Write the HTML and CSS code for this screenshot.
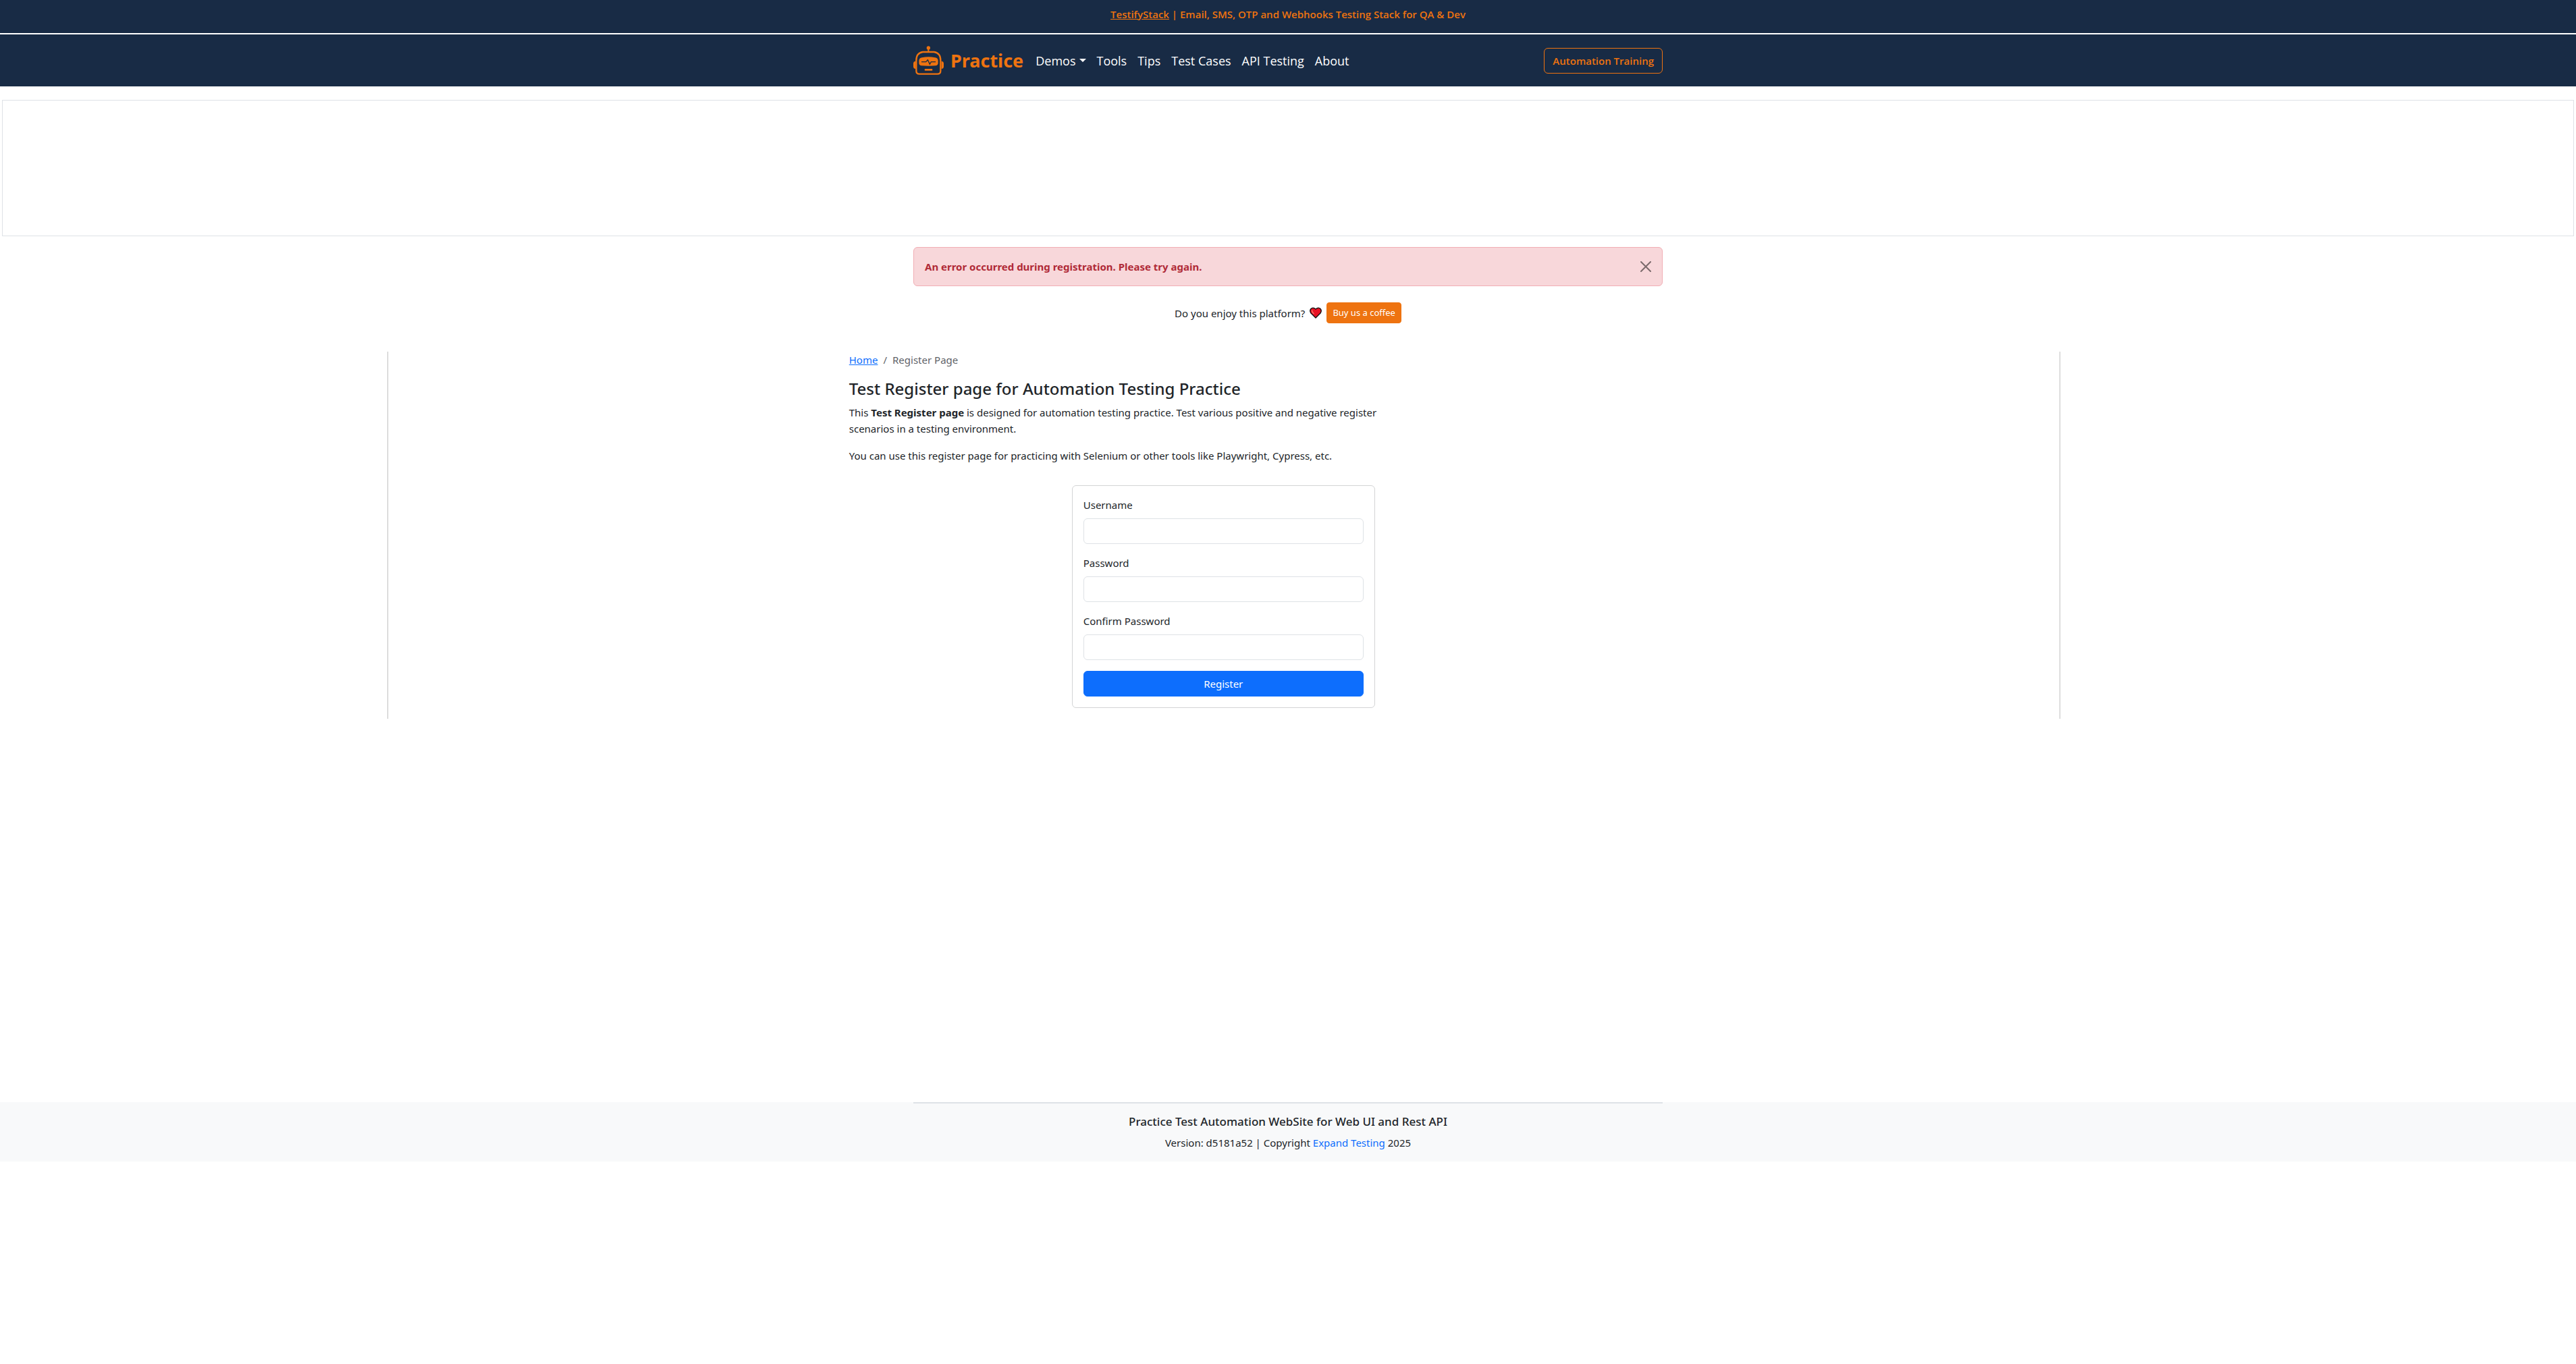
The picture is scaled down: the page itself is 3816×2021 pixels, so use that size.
FILE: index.html
```html
<!DOCTYPE html>
<html lang="en">
<head>
<meta charset="utf-8">
<meta name="viewport" content="width=device-width, initial-scale=1">
<title>Test Register page for Automation Testing Practice</title>
<link rel="stylesheet" href="styles.css">
</head>
<body>
<div class="promo"><a href="#">TestifyStack</a> | Email, SMS, OTP and Webhooks Testing Stack for QA &amp; Dev</div>

<header class="navbar">
  <nav class="container navbar-inner" aria-label="Main">
    <a class="brand" href="#">
      <svg class="brand-logo" viewBox="0 0 135 129" aria-hidden="true">
        <g fill="#ee7310">
          <circle cx="67" cy="9" r="8"/>
          <rect x="64" y="14" width="6" height="14"/>
          <path d="M10 68v34H8q-8-2-8-9V77q0-7 8-9zM125 68v34h2q8-2 8-9V77q0-7-8-9z"/>
          <path d="M38 52q29-6 59 0 13 2 13 14v10q0 11-12 12-31 2-61 0-12-1-12-12V66q0-12 13-14z"/>
          <rect x="50" y="102" width="35" height="8" rx="3"/>
        </g>
        <path d="M42 27h50q29 4 29 38v46q0 14-14 14H27q-14 0-14-14V65q0-34 29-38z" fill="none" stroke="#ee7310" stroke-width="7"/>
        <path d="M36 71h20l8-9 9 19 6-10h20" fill="none" stroke="#182b45" stroke-width="4"/>
      </svg>
      <span>Practice</span>
    </a>
    <ul class="menu">
      <li><a class="has-caret" href="#">Demos</a></li>
      <li><a href="#">Tools</a></li>
      <li><a href="#">Tips</a></li>
      <li><a href="#">Test Cases</a></li>
      <li><a href="#">API Testing</a></li>
      <li><a href="#">About</a></li>
    </ul>
    <a class="btn btn-outline" href="#">Automation Training</a>
  </nav>
</header>

<div class="ad-slot"></div>

<div class="container">
  <div class="alert" role="alert">
    <b>An error occurred during registration. Please try again.</b>
    <button class="close" type="button" aria-label="Close">
      <svg viewBox="0 0 16 16" aria-hidden="true"><path d="M1 1l14 14M15 1L1 15" stroke="#000" stroke-width="2" stroke-linecap="round"/></svg>
    </button>
  </div>
  <div class="support">
    <span>Do you enjoy this platform?</span>
    <svg class="heart" viewBox="0 0 18 17" aria-hidden="true">
      <path d="M9 16L2 9Q-.5 5.500 2 2.500 5-.5 9 3q4-3.500 7-.5 2.500 3 0 6.500z" fill="#e81224" stroke="#111" stroke-width="1.400" stroke-linejoin="round"/>
      <path d="M3.500 4.500q0 3 3 5.500" fill="none" stroke="#f6806c" stroke-width="1.300"/>
    </svg>
    <a class="btn btn-coffee" href="#">Buy us a coffee</a>
  </div>
</div>

<div class="columns">
  <aside></aside>
  <main class="main">
    <div class="content">
      <nav aria-label="Breadcrumb">
        <ol class="breadcrumb"><li><a href="#">Home</a></li><li>Register Page</li></ol>
      </nav>
      <h1>Test Register page for Automation Testing Practice</h1>
      <p>This <b>Test Register page</b> is designed for automation testing practice. Test various positive and negative register scenarios in a testing environment.</p>
      <p>You can use this register page for practicing with Selenium or other tools like Playwright, Cypress, etc.</p>
      <form class="card">
        <div class="field"><label for="username">Username</label><input id="username" type="text"></div>
        <div class="field"><label for="password">Password</label><input id="password" type="password"></div>
        <div class="field"><label for="confirm">Confirm Password</label><input id="confirm" type="password"></div>
        <button class="btn btn-primary" type="submit">Register</button>
      </form>
    </div>
  </main>
  <aside></aside>
</div>

<footer class="footer">
  <div class="container">
    <div class="footer-inner">
      <h2>Practice Test Automation WebSite for Web UI and Rest API</h2>
      <p>Version: d5181a52 | Copyright <a href="#">Expand Testing</a> 2025</p>
    </div>
  </div>
</footer>
</body>
</html>
```
FILE: styles.css
```css
:root {
  --navy: #182b45;
  --orange: #ee7310;
  --blue: #0d6efd;
  --line: #dee2e6;
}

* { box-sizing: border-box; }

body {
  margin: 0;
  background: #fff;
  color: #212529;
  font: 15px/24px "Noto Sans", "Open Sans", sans-serif;
}

h1, h2, p, ul, ol { margin: 0; padding: 0; }
ul, ol { list-style: none; }
a { color: var(--blue); }

.container {
  max-width: 1140px;
  margin: 0 auto;
  padding: 0 15px;
}

.btn {
  display: block;
  border: 1px solid;
  border-radius: 6px;
  font: inherit;
  text-align: center;
  text-decoration: none;
}

/* Top bars */
.promo {
  margin-bottom: 2px;
  padding: 9px 0 16px;
  background: var(--navy);
  color: var(--orange);
  font-family: "Open Sans", "Noto Sans", sans-serif;
  font-weight: 600;
  text-align: center;
}
.promo a { color: inherit; }

.navbar { background: var(--navy); }
.navbar-inner {
  display: flex;
  align-items: center;
  min-height: 77px;
}
.brand {
  display: flex;
  align-items: center;
  gap: 10px;
  margin-right: 18px;
  color: var(--orange);
  font-size: 27px;
  font-weight: 700;
  text-decoration: none;
}
.brand-logo { width: 45px; height: 43px; }
.menu {
  display: flex;
  flex: 1;
  gap: 16px;
  font-family: "Open Sans", "Noto Sans", sans-serif;
  font-size: 18px;
}
.menu a {
  display: flex;
  align-items: center;
  gap: 5px;
  color: #fff;
  text-decoration: none;
}
.has-caret::after {
  content: "";
  border: 5px solid transparent;
  border-top-color: #fff;
  border-bottom: 0;
}
.btn-outline {
  padding: 6px 12px;
  color: var(--orange);
  font-family: "Open Sans", "Noto Sans", sans-serif;
  font-weight: 600;
}

.ad-slot {
  height: 202px;
  margin: 20px 3px 16px;
  border: 1px solid var(--line);
}

/* Messages */
.alert {
  display: flex;
  align-items: center;
  justify-content: space-between;
  padding: 16px;
  border: 1px solid #f1aeb5;
  border-radius: 6px;
  background: #f8d7da;
  color: #b02a37;
}
.close {
  display: flex;
  padding: 0;
  border: 0;
  background: none;
  opacity: 0.5;
}
.close svg { width: 16px; height: 16px; }
.support {
  display: flex;
  align-items: center;
  justify-content: center;
  gap: 7px;
  margin: 24px 0 42px;
}
.heart { width: 18px; height: 17px; }
.btn-coffee {
  padding: 3px 8px;
  border-color: var(--orange);
  border-radius: 4px;
  background: var(--orange);
  color: #fff;
  font-size: 13px;
  line-height: 23px;
}

/* Page columns */
.columns {
  display: grid;
  grid-template-columns: 15% 65% 20%;
  min-height: 1112px;
  padding: 0 3px;
  align-items: start;
}
.main {
  margin: 0 -1px;
  padding-bottom: 16px;
  border: solid #c1c1c1;
  border-width: 0 1px;
}
.content {
  width: 70%;
  max-width: 779px;
  margin-left: calc(50% - 555px);
}
.breadcrumb { display: flex; margin-bottom: 16px; color: #5f6469; }
.breadcrumb li + li::before { content: "/"; padding: 0 8px; }
h1 {
  margin-bottom: 8px;
  font-size: 24px;
  font-weight: 500;
  line-height: 30px;
}
.content p { margin: 0 -8px 16px 0; }

.card {
  width: 449px;
  margin: 32px 0 0 auto;
  padding: 16px;
  border: 1px solid #d3d4d5;
  border-radius: 6px;
}
.field { margin-bottom: 16px; }
.field label { display: block; margin-bottom: 8px; }
.field input {
  display: block;
  width: 100%;
  height: 38px;
  padding: 6px 12px;
  border: 1px solid var(--line);
  border-radius: 6px;
  font: inherit;
}
.btn-primary {
  width: 100%;
  padding: 6px 12px;
  border-color: var(--blue);
  background: var(--blue);
  color: #fff;
}

/* Footer */
.footer { background: #f8f9fa; text-align: center; }
.footer-inner {
  padding: 16px 0;
  border-top: 2px solid var(--line);
}
.footer h2 {
  margin-bottom: 8px;
  font-size: 17px;
  font-weight: 500;
  line-height: 22px;
}
.footer a { text-decoration: none; }
```
